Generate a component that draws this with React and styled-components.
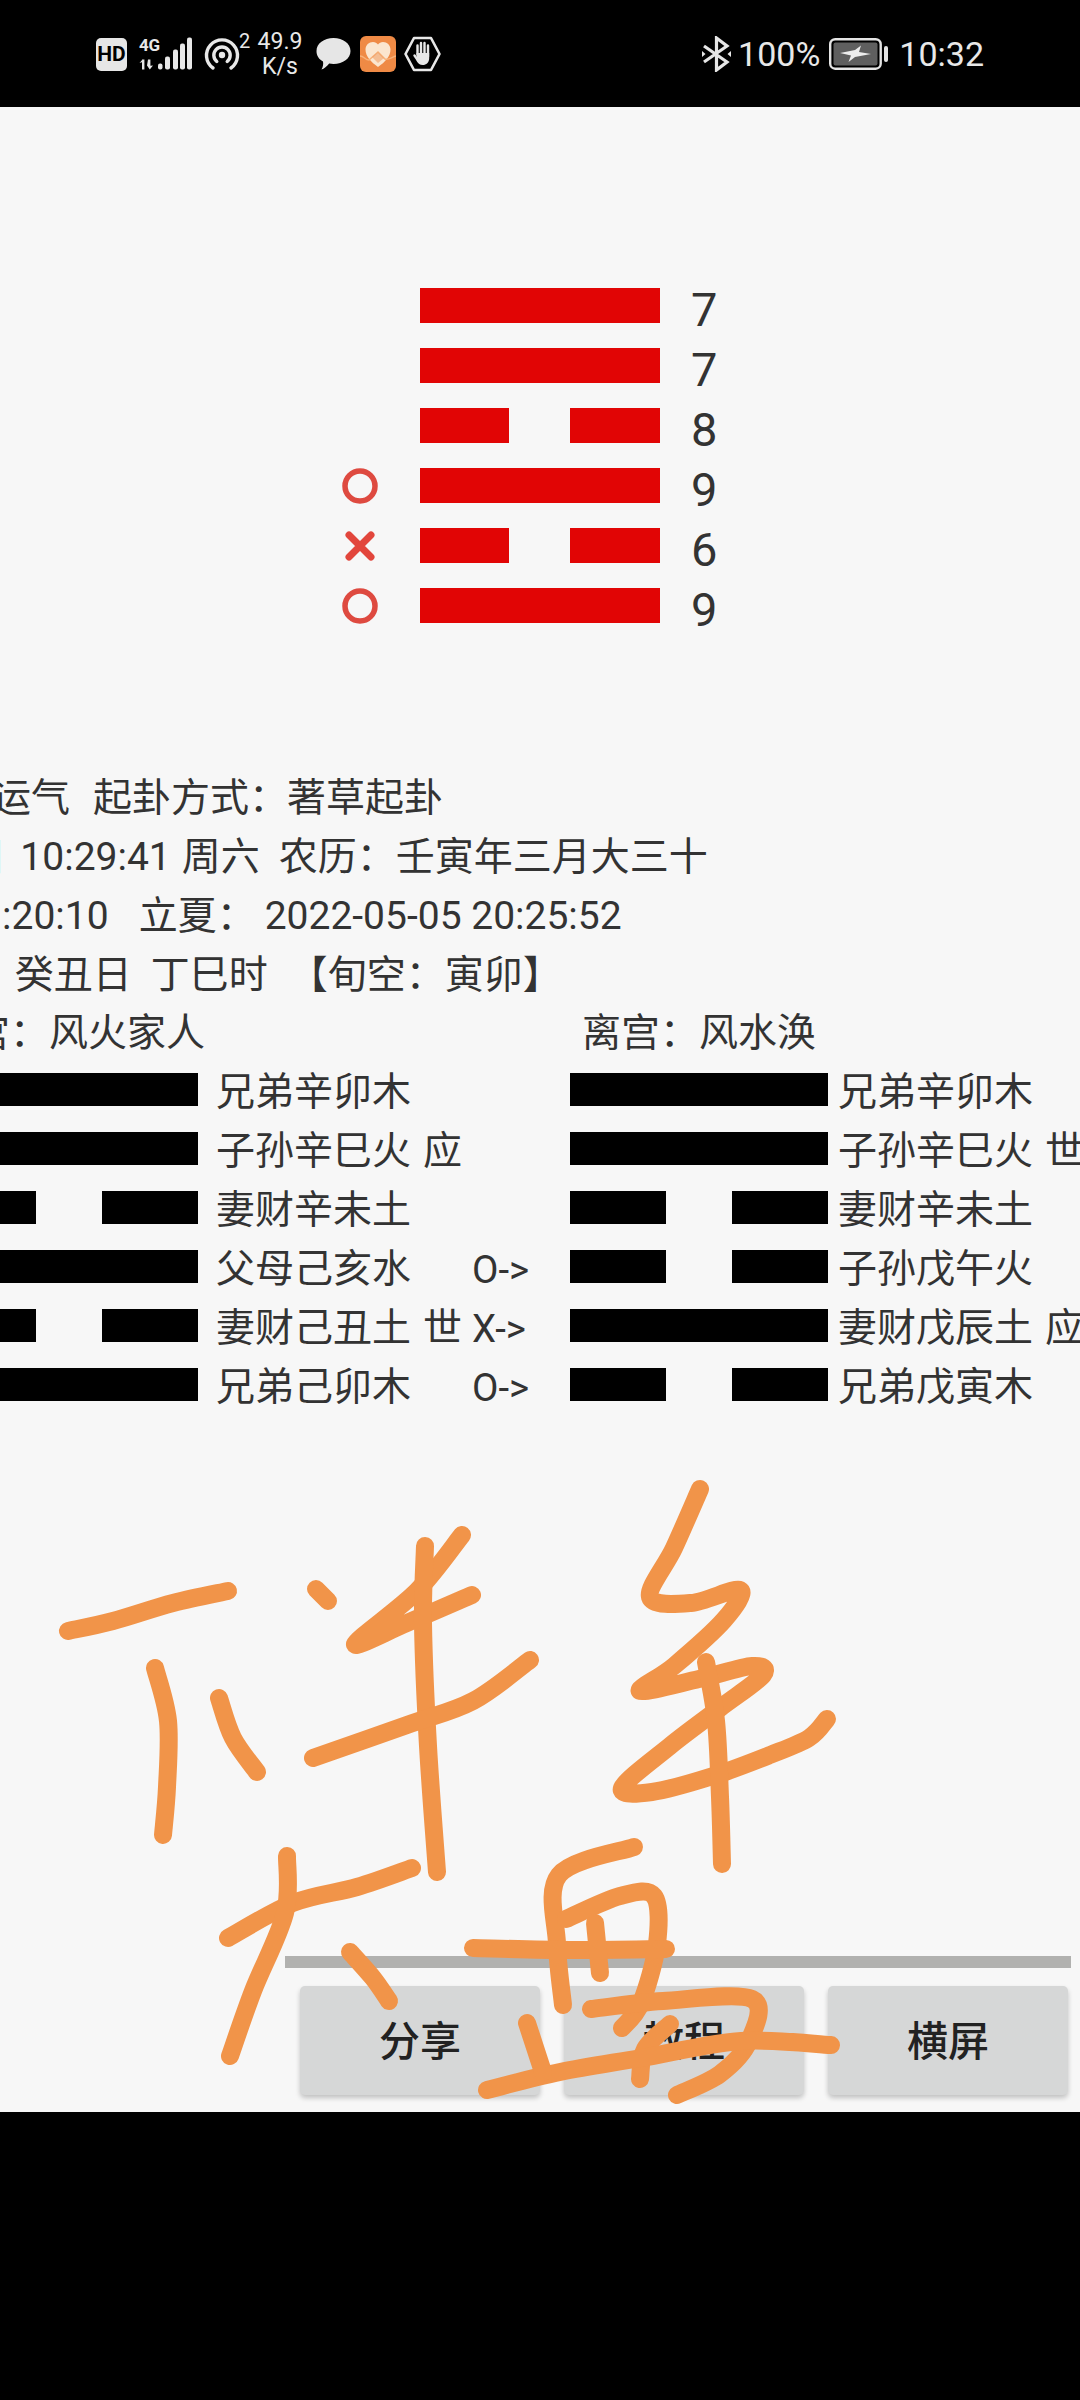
import React from "react";
import styled, { createGlobalStyle } from "styled-components";

const GlobalStyle = createGlobalStyle`
  html, body {
    margin: 0;
    padding: 0;
    background: #000;
    font-family: Roboto, "Noto Sans CJK SC", sans-serif;
  }
`;

const Page = styled.div`
  width: 1080px;
  height: 2400px;
  position: relative;
  overflow: hidden;
  display: flex;
  flex-direction: column;
  background: #000;
`;

/* status bar */
const StatusBar = styled.div`
  height: 107px;
  flex: none;
  display: flex;
  align-items: center;
  justify-content: space-between;
  padding: 0 96px 0 96px;
  color: #e8e8e8;
`;

const StatusGroup = styled.div`
  display: flex;
  align-items: center;
`;

const HdBadge = styled.div`
  width: 31px;
  height: 33px;
  border-radius: 5px;
  background: #e6e6e6;
  color: #000;
  font: 700 21px/33px "Roboto", sans-serif;
  text-align: center;
  margin-top: 1px;
`;

const SignalBox = styled.div`
  width: 54px;
  height: 36px;
  margin-left: 11px;
  position: relative;
  display: flex;
`;

const FourG = styled.span`
  font: 700 17px/17px "Liberation Sans Narrow", Roboto, sans-serif;
  color: #e8e8e8;
  height: 17px;
  margin: 1px 0 0 1px;
  letter-spacing: -0.3px;
`;

const Superscript = styled.span`
  font: 400 20px/20px Roboto, sans-serif;
  align-self: flex-start;
  margin-top: 3px;
  width: 17px;
  margin-left: -1px;
`;

const Speed = styled.div`
  width: 48px;
  font: 400 23px/25px Roboto, sans-serif;
  text-align: center;
  margin-top: 1px;
`;

const StatusText = styled.span`
  font: 400 34px/40px Roboto, sans-serif;
  margin-left: ${(p) => p.$gap || 0}px;
`;

const IconSlot = styled.div`
  display: flex;
  margin-left: ${(p) => p.$gap || 0}px;
`;

/* white app screen */
const Screen = styled.main`
  flex: none;
  height: 2005px;
  box-sizing: border-box;
  background: #f7f7f7;
  color: #333;
  overflow: hidden;
  display: flex;
  flex-direction: column;
  padding-bottom: 17px;
`;

const Hexagram = styled.section`
  padding: 181px 0 0 342px;
  display: flex;
  flex-direction: column;
  gap: 25px;
`;

const YaoRow = styled.div`
  height: 35px;
  display: flex;
  align-items: flex-start;
`;

const Marker = styled.div`
  width: 36px;
  height: 35px;
  margin-right: 42px;
  display: flex;
  align-items: center;
  justify-content: center;
`;

const Line = styled.div`
  width: ${(p) => p.$width}px;
  height: ${(p) => p.$height}px;
  flex: none;
  display: flex;
  justify-content: space-between;
  margin-bottom: ${(p) => p.$lift || 0}px;
`;

const Piece = styled.div`
  width: ${(p) => p.$width};
  background: ${(p) => p.$color};
`;

const YaoNumber = styled.span`
  margin-left: 31px;
  font: 400 47px/35px Roboto, sans-serif;
  padding-top: 4px;
  color: #333;
`;

const InfoBlock = styled.section`
  margin-top: 146px;
  font-size: 39px;
`;

const InfoLine = styled.div`
  height: 59px;
  line-height: 59px;
  white-space: pre;
  margin-left: ${(p) => p.$shift}px;
`;

const Seg = styled.span`
  margin-left: ${(p) => p.$gap || 0}px;
`;

const Table = styled.section`
  display: flex;
  margin: -1px 0 0 -60px;
  font-size: 39px;
`;

const GuaColumn = styled.div`
  flex: none;
  width: ${(p) => p.$width}px;
`;

const GuaTitle = styled.div`
  height: 59px;
  line-height: 59px;
  white-space: pre;
  margin-left: ${(p) => p.$shift}px;
`;

const GuaRow = styled.div`
  height: 59px;
  display: flex;
  align-items: center;
  white-space: pre;
`;

const GuaName = styled.span`
  flex: none;
  line-height: 59px;
  margin-left: ${(p) => p.$gap}px;
  width: ${(p) => p.$width}px;
`;

const Tag = styled.span`
  margin-left: 12px;
`;

const Change = styled.span`
  line-height: 59px;
  font-size: 38.4px;
`;

const BottomArea = styled.div`
  margin-top: auto;
  padding-left: 285px;
`;

const Slider = styled.div`
  width: 786px;
  height: 12px;
  background: #b1b1af;
`;

const ButtonRow = styled.div`
  display: flex;
  gap: 24px;
  margin: 18px 0 0 15px;
`;

const ActionButton = styled.button`
  width: 240px;
  height: 109px;
  padding: 0 0 5px;
  border: 0;
  border-radius: 5px;
  background: #d6d7d7;
  box-shadow: 0 3px 5px rgba(0, 0, 0, 0.22);
  color: #222;
  font: 500 41px "Noto Sans CJK SC", sans-serif;
`;

const Scribble = styled.svg`
  position: absolute;
  left: 0;
  top: 0;
  pointer-events: none;
`;

const SignalIcon = () => (
  <svg width="54" height="36" viewBox="0 0 54 36" style={{ position: "absolute", left: 0, top: 0 }}>
    <g fill="#e8e8e8">
      <path d="M4 23.500h2.400v10H4zM1.500 27l3-3.500v2.400zM10 23.500h2.400v6.200l2.600-.2-3.200 4L9 29.500z" />
      <rect x="20" y="27.500" width="4.500" height="6" rx="2" />
      <rect x="27" y="20.500" width="5" height="13" rx="2" />
      <rect x="35" y="13.500" width="5" height="20" rx="2" />
      <rect x="42" y="7.500" width="5" height="26" rx="2" />
      <rect x="49" y="1.500" width="5" height="32" rx="2" />
    </g>
  </svg>
);

const HotspotIcon = () => (
  <svg width="36" height="34" viewBox="0 0 36 34">
    <g fill="none" stroke="#e8e8e8" strokeWidth="3.400" strokeLinecap="round">
      <path d="M9 31A15.500 15.500 0 1 1 27 31" />
      <path d="M12.800 24.500A8.200 8.200 0 1 1 23.200 24.500" />
    </g>
    <circle cx="18" cy="18" r="3.200" fill="#e8e8e8" />
  </svg>
);

const ChatIcon = () => (
  <svg width="35" height="32" viewBox="0 0 35 32">
    <path
      d="M17.500 0C27 0 34.500 5.500 34.500 13S27 26 17.500 26c-1.500 0-3-.2-4.300-.4C11 28.500 8 31 5.500 31.500 7 29 7.500 26 7 23.500 2.800 21.300.5 17.500.5 13 .5 5.500 8 0 17.500 0z"
      fill="#e6e6e6"
    />
  </svg>
);

const HealthIcon = () => (
  <svg width="36" height="36" viewBox="0 0 36 36">
    <rect width="36" height="36" rx="6" fill="#ef8a45" />
    <path
      d="M18 31C11 26 5.500 20.500 5.500 13.500 5.500 9 9 6 13 6c2.200 0 3.800 1 5 2.500C19.200 7 20.800 6 23 6c4 0 7.500 3 7.500 7.500C30.500 20.500 25 26 18 31z"
      fill="#fbe6cf"
    />
    <path d="M0 20c4 0 5 4 9 4l9-8 7 7c4 1 7-2 11-3" fill="none" stroke="#f7b27a" strokeWidth="1.500" />
    <path d="M12 21l6-5 6 6-6 5z" fill="#ef9a60" opacity="0.55" />
  </svg>
);

const HandIcon = () => (
  <svg width="37" height="36" viewBox="0 0 37 36">
    <path d="M10 2h17l8.500 16L27 34H10L1.500 18z" fill="none" stroke="#e8e8e8" strokeWidth="2.600" strokeLinejoin="round" />
    <path
      d="M13.500 9.500v9M17 7v10M20.500 7v10M24 9.500v11M10.500 19.500l3.500 5"
      fill="none"
      stroke="#e8e8e8"
      strokeWidth="2.400"
      strokeLinecap="round"
    />
    <path d="M12.500 17h12.700v5c0 4.500-3 7-6.500 7-3 0-4.500-1.500-6-4z" fill="#e8e8e8" />
  </svg>
);

const BluetoothIcon = () => (
  <svg width="29" height="36" viewBox="0 0 29 36">
    <path d="M2 10l23 16-10.500 8V2L25 10 2 26" fill="none" stroke="#e6e6e6" strokeWidth="3.200" />
    <path d="M0 15l3.500 3L0 21zM29 15l-3.500 3 3.500 3z" fill="#e6e6e6" />
  </svg>
);

const BatteryIcon = () => (
  <svg width="60" height="32" viewBox="0 0 60 32">
    <rect x="1.200" y="1.200" width="50.500" height="29.500" rx="5" fill="none" stroke="#e4e4e4" strokeWidth="2.400" />
    <rect x="4.500" y="4.500" width="44" height="23" rx="2" fill="#5f5f5f" />
    <path d="M11 15l15-3 6-4.500-2 6.500 12 2-16 3-6.500 5 2.500-6.500z" fill="#ececec" />
    <rect x="55" y="8" width="4" height="16" rx="2" fill="#e4e4e4" />
  </svg>
);

const OldYangMark = () => (
  <svg width="36" height="36" viewBox="0 0 36 36">
    <circle cx="18" cy="18" r="15" fill="none" stroke="#de4a40" strokeWidth="5.500" />
  </svg>
);

const OldYinMark = () => (
  <svg width="36" height="36" viewBox="0 0 36 36">
    <path d="M7 7l22 22M29 7L7 29" fill="none" stroke="#e2463c" strokeWidth="7" strokeLinecap="round" />
  </svg>
);

const mainYao = [
  { yang: true, num: 7 },
  { yang: true, num: 7 },
  { yang: false, num: 8 },
  { yang: true, num: 9, mark: <OldYangMark /> },
  { yang: false, num: 6, mark: <OldYinMark /> },
  { yang: true, num: 9, mark: <OldYangMark /> },
];

const benGua = [
  { yang: true, name: "兄弟辛卯木" },
  { yang: true, name: "子孙辛巳火", tag: "应" },
  { yang: false, name: "妻财辛未土" },
  { yang: true, name: "父母己亥水", change: "O->" },
  { yang: false, name: "妻财己丑土", tag: "世", change: "X->" },
  { yang: true, name: "兄弟己卯木", change: "O->" },
];

const bianGua = [
  { yang: true, name: "兄弟辛卯木" },
  { yang: true, name: "子孙辛巳火", tag: "世" },
  { yang: false, name: "妻财辛未土" },
  { yang: false, name: "子孙戊午火" },
  { yang: true, name: "妻财戊辰土", tag: "应" },
  { yang: false, name: "兄弟戊寅木" },
];

// full-page coordinates of the orange finger strokes
const strokes = [
  [[68, 1631], [113, 1621], [173, 1603], [228, 1591]],
  [[155, 1668], [168, 1721], [167, 1787], [163, 1835]],
  [[219, 1698], [233, 1738], [257, 1772]],
  [[316, 1589], [328, 1601]],
  [[462, 1535], [417, 1591], [355, 1644], [407, 1623], [472, 1595]],
  [[425, 1546], [423, 1623], [428, 1746], [437, 1872]],
  [[313, 1758], [407, 1725], [473, 1701], [530, 1660]],
  [[228, 1938], [293, 1903], [357, 1887], [412, 1868]],
  [[287, 1856], [285, 1913], [253, 1991], [230, 2056]],
  [[350, 1952], [373, 1978], [389, 2001]],
  [[700, 1489], [674, 1548], [650, 1597], [691, 1603], [740, 1590], [724, 1620], [674, 1666], [640, 1691], [699, 1679], [752, 1666], [763, 1675], [720, 1708], [670, 1746], [622, 1788], [652, 1792], [713, 1776], [770, 1755], [809, 1738], [827, 1719]],
  [[706, 1662], [716, 1721], [720, 1797], [722, 1864]],
  [[634, 1847], [559, 1875], [557, 1944], [563, 2005]],
  [[566, 1919], [620, 1896], [654, 1896], [657, 1944], [641, 2003], [622, 2028]],
  [[473, 1948], [570, 1950], [666, 1949]],
  [[595, 1923], [600, 1973]],
  [[591, 2009], [663, 2001], [752, 1999], [749, 2041], [720, 2074], [677, 2095]],
  [[670, 2024], [645, 2049], [640, 2079]],
  [[487, 2090], [560, 2072], [641, 2058], [741, 2041], [831, 2045]],
  [[527, 2023], [543, 2072]],
];

// catmull-rom through every point, so the sharp turns of the pen stay where they were
const toPath = (pts) => {
  let d = `M${pts[0][0]} ${pts[0][1]}`;
  for (let i = 0; i < pts.length - 1; i++) {
    const p0 = pts[i - 1] || pts[i];
    const p1 = pts[i];
    const p2 = pts[i + 1];
    const p3 = pts[i + 2] || p2;
    const c1x = p1[0] + (p2[0] - p0[0]) / 6;
    const c1y = p1[1] + (p2[1] - p0[1]) / 6;
    const c2x = p2[0] - (p3[0] - p1[0]) / 6;
    const c2y = p2[1] - (p3[1] - p1[1]) / 6;
    d += `C${c1x} ${c1y} ${c2x} ${c2y} ${p2[0]} ${p2[1]}`;
  }
  return d;
};

const GuaLine = ({ yang }) => (
  <Line $width={258} $height={33} $lift={6}>
    {yang ? <Piece $width="100%" $color="#000" /> : (
      <>
        <Piece $width="96px" $color="#000" />
        <Piece $width="96px" $color="#000" />
      </>
    )}
  </Line>
);

const App = () => {
  return (
    <Page>
      <GlobalStyle />
      <StatusBar>
        <StatusGroup>
          <HdBadge>HD</HdBadge>
          <SignalBox>
            <FourG>4G</FourG>
            <SignalIcon />
          </SignalBox>
          <IconSlot $gap={12}><HotspotIcon /></IconSlot>
          <Superscript>2</Superscript>
          <Speed>49.9<br />K/s</Speed>
          <IconSlot $gap={12}><ChatIcon /></IconSlot>
          <IconSlot $gap={9}><HealthIcon /></IconSlot>
          <IconSlot $gap={8}><HandIcon /></IconSlot>
        </StatusGroup>
        <StatusGroup>
          <BluetoothIcon />
          <StatusText $gap={7}>100%</StatusText>
          <IconSlot $gap={9}><BatteryIcon /></IconSlot>
          <StatusText $gap={10}>10:32</StatusText>
        </StatusGroup>
      </StatusBar>

      <Screen>
        <Hexagram>
          {mainYao.map((yao, i) => (
            <YaoRow key={i}>
              <Marker>{yao.mark}</Marker>
              <Line $width={240} $height={35}>
                {yao.yang ? <Piece $width="100%" $color="#e10505" /> : (
                  <>
                    <Piece $width="89px" $color="#e10505" />
                    <Piece $width="90px" $color="#e10505" />
                  </>
                )}
              </Line>
              <YaoNumber>{yao.num}</YaoNumber>
            </YaoRow>
          ))}
        </Hexagram>

        <InfoBlock>
          <InfoLine $shift={-125}>占事：运气<Seg $gap={23}>起卦方式：</Seg><Seg $gap={-1}>著草起卦</Seg></InfoLine>
          <InfoLine $shift={-286}>2022年04月30日<Seg $gap={14}>10:29:41</Seg><Seg $gap={11}>周六</Seg><Seg $gap={19}>农历：壬寅年三月大三十</Seg></InfoLine>
          <InfoLine $shift={-375}>谷雨： 2022-04-20 11:20:10<Seg $gap={30}>立夏：</Seg><Seg $gap={9}>2022-05-05 20:25:52</Seg></InfoLine>
          <InfoLine $shift={-254}>壬寅年 甲辰月<Seg $gap={25}>癸丑日</Seg><Seg $gap={19}>丁巳时</Seg><Seg $gap={21}>【旬空：寅卯】</Seg></InfoLine>
        </InfoBlock>

        <Table>
          <GuaColumn $width={630}>
            <GuaTitle $shift={-8}>巽宫：风火家人</GuaTitle>
            {benGua.map((row, i) => (
              <GuaRow key={i}>
                <GuaLine yang={row.yang} />
                <GuaName $gap={18} $width={256}>{row.name}{row.tag && <Tag>{row.tag}</Tag>}</GuaName>
                {row.change && <Change>{row.change}</Change>}
              </GuaRow>
            ))}
          </GuaColumn>
          <GuaColumn $width={520}>
            <GuaTitle $shift={12}>离宫：风水涣</GuaTitle>
            {bianGua.map((row, i) => (
              <GuaRow key={i}>
                <GuaLine yang={row.yang} />
                <GuaName $gap={10} $width={250}>{row.name}{row.tag && <Tag>{row.tag}</Tag>}</GuaName>
              </GuaRow>
            ))}
          </GuaColumn>
        </Table>

        <BottomArea>
          <Slider />
          <ButtonRow>
            <ActionButton>分享</ActionButton>
            <ActionButton>教程</ActionButton>
            <ActionButton>横屏</ActionButton>
          </ButtonRow>
        </BottomArea>
      </Screen>

      <Scribble width="1080" height="2400" viewBox="0 0 1080 2400">
        <g fill="none" stroke="#f19449" strokeWidth="18" strokeLinecap="round" strokeLinejoin="round">
          {strokes.map((pts, i) => (
            <path key={i} d={toPath(pts)} />
          ))}
        </g>
      </Scribble>
    </Page>
  );
};

export default App;
